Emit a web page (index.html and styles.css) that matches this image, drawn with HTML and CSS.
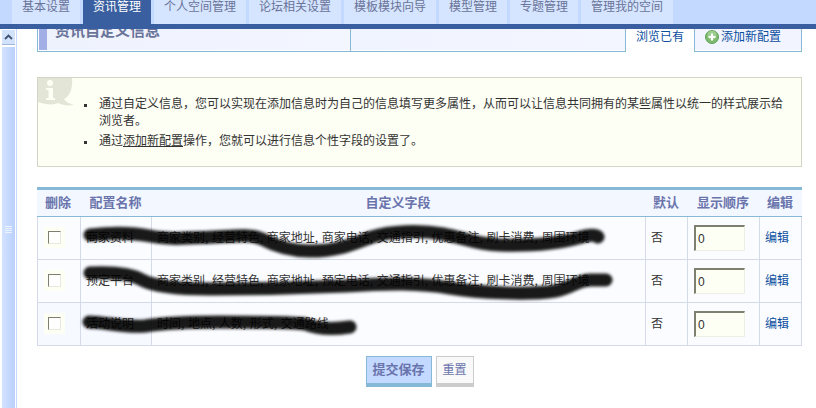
FILE: index.html
```html
<!DOCTYPE html>
<html lang="zh">
<head>
<meta charset="utf-8">
<title>资讯管理</title>
<link rel="stylesheet" href="styles.css">
</head>
<body>
<nav class="topnav">
  <a class="topnav-tab">基本设置</a>
  <a class="topnav-tab is-active">资讯管理</a>
  <a class="topnav-tab">个人空间管理</a>
  <a class="topnav-tab">论坛相关设置</a>
  <a class="topnav-tab">模板模块向导</a>
  <a class="topnav-tab">模型管理</a>
  <a class="topnav-tab">专题管理</a>
  <a class="topnav-tab">管理我的空间</a>
</nav>
<div class="shell">
  <aside class="scrollbar">
    <div class="scroll-btn">
      <svg class="scroll-chevron" viewBox="0 0 9 6"><path d="M1 5 L4.5 1.5 L8 5" fill="none" stroke="#3f5373" stroke-width="1.8"/></svg>
    </div>
    <div class="scroll-thumb">
      <span class="grip"></span>
      <span class="grip"></span>
      <span class="grip"></span>
      <span class="grip"></span>
    </div>
  </aside>
  <main class="main">
    <header class="head">
      <div class="head-title">
        <h1 class="head-text">资讯自定义信息</h1>
      </div>
      <div class="head-blank"></div>
      <a class="head-tab is-current">浏览已有</a>
      <a class="head-tab is-add">
        <svg class="plus-icon" viewBox="0 0 14 14">
          <circle cx="7" cy="7" r="6.5" fill="#7dba6e" stroke="#5f9f58" stroke-width="1"/>
          <circle cx="7" cy="5" r="4.5" fill="#a9d69c" opacity=".7"/>
          <path d="M7 3.5 V10.5 M3.5 7 H10.5" stroke="#fff" stroke-width="2.2"/>
        </svg>添加新配置
      </a>
    </header>

    <section class="notice">
      <svg class="notice-icon" viewBox="0 0 36 30">
        <path d="M0 0 H34 C35 10 32 18 26 21 C28 24 31 26 36 27 C30 28 24 27 20 25 C16 27 8 27 0 24 Z" fill="#e3e5d6"/>
        <circle cx="12" cy="5" r="3" fill="#fdfef4"/>
        <path d="M8 10 H15 V20 H17 V22 H8 V20 H10.500 V12 H8 Z" fill="#fdfef4"/>
      </svg>
      <ul class="notice-list">
        <li>通过自定义信息，您可以实现在添加信息时为自己的信息填写更多属性，从而可以让信息共同拥有的某些属性以统一的样式展示给浏览者。</li>
        <li>通过<a class="notice-link">添加新配置</a>操作，您就可以进行信息个性字段的设置了。</li>
      </ul>
    </section>

    <table class="grid">
      <colgroup>
        <col class="c-del"><col class="c-name"><col class="c-field"><col class="c-def"><col class="c-order"><col class="c-edit">
      </colgroup>
      <thead>
        <tr>
          <th>删除</th><th>配置名称</th><th>自定义字段</th><th>默认</th><th>显示顺序</th><th>编辑</th>
        </tr>
      </thead>
      <tbody>
        <tr>
          <td><input class="check" type="checkbox"></td>
          <td class="txt">商家资料</td>
          <td class="txt">商家类别, 经营特色, 商家地址, 商家电话, 交通指引, 优惠备注, 刷卡消费, 周围环境</td>
          <td class="txt">否</td>
          <td><input class="order" type="text" value="0"></td>
          <td class="txt"><a class="edit">编辑</a></td>
        </tr>
        <tr>
          <td><input class="check" type="checkbox"></td>
          <td class="txt">预定平台</td>
          <td class="txt">商家类别, 经营特色, 商家地址, 预定电话, 交通指引, 优惠备注, 刷卡消费, 周围环境</td>
          <td class="txt">否</td>
          <td><input class="order" type="text" value="0"></td>
          <td class="txt"><a class="edit">编辑</a></td>
        </tr>
        <tr class="row-alt">
          <td><input class="check" type="checkbox"></td>
          <td class="txt">活动说明</td>
          <td class="txt">时间, 地点, 人数, 形式, 交通路线</td>
          <td class="txt">否</td>
          <td><input class="order" type="text" value="0"></td>
          <td class="txt"><a class="edit">编辑</a></td>
        </tr>
      </tbody>
    </table>

    <div class="actions">
      <button class="btn btn-primary" type="button">提交保存</button>
      <button class="btn btn-plain" type="button">重置</button>
    </div>
  </main>
</div>
<svg class="scribbles" viewBox="0 0 816 408" width="816" height="408">
  <defs>
    <filter id="smear" x="-5%" y="-100%" width="110%" height="300%"><feGaussianBlur stdDeviation="1.8"/></filter>
  </defs>
  <g class="scribble-lines" filter="url(#smear)">
    <path d="M90 235 C115 232 135 233 150 236 C170 240 190 238 215 237 C235 236 250 234 262 239 C275 246 290 251 310 251 C340 251 355 243 372 237 C390 231 420 230 443 234 C465 238 475 244 500 245 C535 246 560 243 578 238 C590 234 597 235 598 237"/>
    <path d="M90 273 C110 272 130 273 142 280 C155 287 180 289 210 289 C260 289 300 288 345 286 C390 283 420 283 450 288 C480 293 530 295 555 291 C572 288 575 281 590 280 L606 280"/>
    <path d="M89 322 C105 322 125 328 145 326 C165 323 190 322 220 322 C260 322 290 322 305 324 C315 328 330 330 350 327"/>
  </g>
</svg>
</body>
</html>
```
FILE: styles.css
```css
* {
  box-sizing: border-box;
}

html,
body {
  margin: 0;
  height: 408px;
  overflow: hidden;
  background: #fff;
}

body {
  position: relative;
  display: flex;
  flex-direction: column;
  font-family: "Noto Sans CJK SC", "Liberation Sans", sans-serif;
  font-size: 12px;
  color: #333;
}

/* top navigation */
.topnav {
  flex: none;
  display: flex;
  gap: 3px;
  height: 29px;
  padding-left: 12px;
  background: #c3d9ff;
  border-bottom: 5px solid #3a5fa0;
}

.topnav-tab {
  width: 68px;
  flex: none;
  text-align: center;
  line-height: 12px;
  white-space: nowrap;
  color: #6a7399;
  background: #d5e5ff;
}

.topnav-tab:nth-child(n + 3):nth-child(-n + 5),
.topnav-tab:nth-child(8) {
  width: 92px;
}

.topnav-tab.is-active {
  color: #fff;
  background: #3a5fa0;
}

/* shell and scrollbar */
.shell {
  flex: 1;
  display: flex;
  min-height: 0;
}

.scrollbar {
  flex: none;
  width: 17px;
  display: flex;
  flex-direction: column;
  gap: 2px;
  padding: 1px 1px 0 2px;
  border-right: 1px solid #c3d9ff;
}

.scroll-btn {
  height: 15px;
  display: flex;
  align-items: center;
  justify-content: center;
  background: #d3e2fb;
  border-bottom: 1px solid #9fb7de;
}

.scroll-chevron {
  width: 9px;
  height: 6px;
}

.scroll-thumb {
  flex: 1;
  display: flex;
  flex-direction: column;
  align-items: center;
  gap: 1px;
  padding-top: 179px;
  background: linear-gradient(90deg, #d3e2ff, #b9d0fd);
}

.grip {
  width: 7px;
  height: 1px;
  background: #eef4ff;
}

.main {
  flex: 1;
  min-width: 0;
  padding: 0 14px 0 20px;
}

/* section header */
.head {
  display: flex;
  height: 23px;
}

.head-title {
  width: 314px;
  overflow: hidden;
  padding-left: 8px;
  border-left: 1px solid #86b9d6;
  border-right: 1px solid #86b9d6;
  border-bottom: 1px solid #86b9d6;
  box-shadow: inset 1px -1px 0 #fff, inset 9px 0 0 #a2afe6, inset 1px -1px 0 #fff;
  background: linear-gradient(90deg, #eef2fd, #f3f6ff);
}

.head-text {
  margin: -8px 0 0;
  padding-left: 9px;
  font-size: 15px;
  line-height: 17px;
  font-weight: 700;
  white-space: nowrap;
  color: #6a7399;
}

.head-blank {
  width: 275px;
  border-right: 1px solid #86b9d6;
  border-bottom: 1px solid #86b9d6;
  box-shadow: inset 0 -1px 0 #fff;
  background: linear-gradient(90deg, #f0f4ff, #f3f6ff);
}

.head-tab {
  display: flex;
  align-items: flex-start;
  color: #0b4f9e;
  line-height: 14px;
  white-space: nowrap;
}

.head-tab.is-current {
  width: 68px;
  padding: 0 0 0 10px;
}

.head-tab.is-add {
  width: 108px;
  padding: 0 0 0 10px;
  gap: 2px;
  border-left: 1px solid #86b9d6;
  border-right: 1px solid #86b9d6;
  border-bottom: 1px solid #86b9d6;
  box-shadow: inset 0 -1px 0 #fff;
  background: #f2f5ff;
}

.plus-icon {
  width: 14px;
  height: 14px;
  margin-top: 1px;
}

/* notice */
.notice {
  position: relative;
  height: 90px;
  margin-top: 25px;
  background: #fdfef4;
  border: 1px solid #d4d6c5;
}

.notice-icon {
  position: absolute;
  left: 0;
  top: 0;
  width: 36px;
  height: 30px;
}

.notice-list {
  position: relative;
  margin: 0;
  padding: 16px 0 0 61px;
  width: 750px;
  list-style: none;
  line-height: 17px;
}

.notice-list li {
  position: relative;
  margin-bottom: 3px;
}

.notice-list li::before {
  content: "";
  position: absolute;
  left: -15px;
  top: 10px;
  width: 3px;
  height: 3px;
  background: #333;
}

.notice-link {
  text-decoration: underline;
}

/* table */
.grid {
  width: 765px;
  margin-top: 20px;
  table-layout: fixed;
  border-collapse: separate;
  border-spacing: 0;
  border-top: 3px solid #86b9d6;
  background: #fbfcff;
}

.c-del { width: 44px; }
.c-name { width: 71px; }
.c-field { width: 494px; }
.c-def { width: 42px; }
.c-order { width: 72px; }
.c-edit { width: 42px; }

.grid th {
  height: 27px;
  padding: 0 2px 4px 0;
  font-size: 13px;
  font-weight: 700;
  text-align: center;
  color: #6a74ac;
  background: #f3f7ff;
  border-bottom: 1px solid #86b9d6;
}

.grid td {
  height: 43px;
  padding: 0 0 0 5px;
  white-space: nowrap;
  overflow: hidden;
  border-right: 1px solid #d5dae8;
  border-bottom: 1px solid #d5dae8;
}

.grid td.txt {
  padding-bottom: 4px;
  word-spacing: 0.9px;
}

.grid td:first-child {
  padding-left: 10px;
  border-left: 1px solid #d5dae8;
}

.row-alt td {
  background: #f6f9ff;
}

.row-alt td:nth-child(n + 3) {
  background: #fbfcff;
}

.check {
  display: block;
  appearance: none;
  width: 13px;
  height: 13px;
  margin: 0 0 1px;
  background: #fff;
  border: 1px solid #e8e8dc;
  border-top-color: #7f7f70;
  border-left-color: #7f7f70;
  box-shadow: 0 0 0 4px #fdfef4;
}

.order {
  display: block;
  width: 51px;
  height: 26px;
  margin-left: 1px;
  padding: 0 0 0 2px;
  font-family: "Liberation Sans", sans-serif;
  font-size: 12px;
  color: #333;
  background: #fdfef4;
  border: 1px solid #eeeee4;
  border-top: 2px solid #7f7f70;
  border-left: 2px solid #7f7f70;
  outline: none;
}

.edit {
  color: #0b4f9e;
}

/* buttons */
.actions {
  display: flex;
  justify-content: center;
  gap: 4px;
  margin-top: 10px;
}

.btn {
  height: 31px;
  padding: 0 0 3px;
  font-family: inherit;
  line-height: 1;
  color: #6a74ac;
  border-style: solid;
  border-width: 1px 1px 4px;
}

.btn-primary {
  width: 66px;
  font-size: 13px;
  font-weight: 700;
  background: #c3d9ff;
  border-color: #86b9d6;
}

.btn-plain {
  width: 38px;
  font-size: 12px;
  background: #f9f9f9;
  border-color: #ccc;
}

/* marker scribbles laid over the table */
.scribbles {
  position: absolute;
  left: 0;
  top: 0;
  pointer-events: none;
}

.scribble-lines path {
  fill: none;
  stroke: #000;
  stroke-width: 13;
  stroke-linecap: round;
  stroke-linejoin: round;
  opacity: 0.9;
}
```
